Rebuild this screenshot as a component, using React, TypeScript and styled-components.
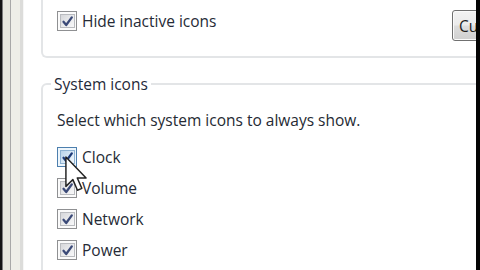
import React from "react";
import styled, { createGlobalStyle } from "styled-components";

const GlobalStyle = createGlobalStyle`
  html, body {
    margin: 0;
    padding: 0;
    background: #ffffff;
    overflow: hidden;
  }
  body {
    font-family: "Open Sans", "Noto Sans", sans-serif;
    font-size: 15.5px;
    color: #222;
  }
`;

const Frame = styled.div`
  position: relative;
  display: flex;
  width: 480px;
  height: 270px;
  overflow: hidden;
`;

const WindowEdge = styled.div`
  flex: 0 0 24px;
  background: linear-gradient(
    to right,
    #141414 0px,
    #141414 2px,
    #7c7c7c 2px,
    #7c7c7c 3px,
    #e7e7de 3px,
    #e7e7de 10px,
    #a8a8a8 10px,
    #a8a8a8 11px,
    #eeeee8 11px,
    #eeeee8 20px,
    #dcdcda 20px,
    #dcdcda 23px,
    #f6f6f6 23px
  );
`;

const RightEdge = styled.div`
  flex: 0 0 4px;
  background: #050505;
`;

const Dialog = styled.div`
  flex: 1;
  min-width: 0;
  background: #ffffff;
  padding-left: 17px;
  display: flex;
  flex-direction: column;
  overflow: hidden;
`;

const TopGroup = styled.div`
  box-sizing: border-box;
  width: calc(100% + 80px);
  height: 78px;
  margin-top: -20px;
  padding: 30px 4px 0 14px;
  border-left: 2px solid #e3e5e7;
  border-bottom: 2px solid #e3e5e7;
  border-bottom-left-radius: 6px;
  display: flex;
  align-items: flex-start;
  flex-shrink: 0;
`;

const SystemGroup = styled.fieldset`
  box-sizing: border-box;
  width: calc(100% + 80px);
  min-inline-size: 0;
  margin: 16px 0 0 0;
  padding: 0 0 40px 14px;
  border: 2px solid #e3e5e7;
  border-radius: 6px;
  flex-shrink: 0;
`;

const Legend = styled.legend`
  margin-left: -6px;
  padding: 0 3px;
  line-height: 20px;
  color: #1f2a3a;
`;

const Hint = styled.div`
  margin-top: 16px;
  line-height: 20px;
  color: #252a33;
`;

const List = styled.div`
  margin-top: 17px;
  display: flex;
  flex-direction: column;
  gap: 11px;
`;

const CheckRow = styled.label<{ $offset?: number }>`
  display: flex;
  align-items: center;
  gap: 5px;
  height: 20px;
  margin-top: ${(p) => p.$offset ?? 0}px;
  line-height: 20px;
  color: #262b36;
`;

const Box = styled.span<{ $hot?: boolean }>`
  box-sizing: border-box;
  width: 20px;
  height: 20px;
  border: 1px solid ${(p) => (p.$hot ? "#4d7fae" : "#8f9092")};
  background: ${(p) => (p.$hot ? "#eef6fc" : "#fbfbfb")};
  padding: 2px;
  display: flex;
`;

const BoxInner = styled.span<{ $hot?: boolean }>`
  flex: 1;
  border: 1px solid ${(p) => (p.$hot ? "#8fb3d3" : "#b9bbbf")};
  background: ${(p) =>
    p.$hot
      ? "linear-gradient(135deg, #b9d3ea 0%, #d9e9f6 55%, #f2f8fd 100%)"
      : "linear-gradient(135deg, #d6d7da 0%, #eaebed 55%, #f8f8f9 100%)"};
  display: flex;
  align-items: center;
  justify-content: center;
`;

const Button = styled.button`
  box-sizing: border-box;
  margin-left: auto;
  width: 100px;
  height: 31px;
  padding: 0 0 0 6px;
  text-align: left;
  font: inherit;
  color: #1c1c1c;
  border: 1px solid #707070;
  border-radius: 3px;
  background: linear-gradient(
    to bottom,
    #f3f3f3 0%,
    #ebebeb 48%,
    #dddddd 52%,
    #cfcfcf 100%
  );
  box-shadow: inset 0 0 0 1px #fbfbfb;
`;

const CursorLayer = styled.svg`
  position: absolute;
  left: 65px;
  top: 156px;
  width: 22px;
  height: 36px;
  pointer-events: none;
`;

const Check: React.FC<{ hot?: boolean }> = ({ hot }) => (
  <svg width="13" height="13" viewBox="0 0 13 13">
    <path
      d="M2.5 6.8 L5.2 10 L10.8 2.4"
      fill="none"
      stroke={hot ? "#1c3a78" : "#3b4a78"}
      strokeWidth="2.3"
      strokeLinecap="round"
      strokeLinejoin="round"
    />
  </svg>
);

const Checkbox: React.FC<{ label: string; offset?: number; hot?: boolean }> = ({
  label,
  offset,
  hot,
}) => (
  <CheckRow $offset={offset}>
    <Box $hot={hot}>
      <BoxInner $hot={hot}>
        <Check hot={hot} />
      </BoxInner>
    </Box>
    {label}
  </CheckRow>
);

const systemIcons = ["Clock", "Volume", "Network", "Power"];

const App: React.FC = () => {
  return (
    <>
      <GlobalStyle />
      <Frame>
        <WindowEdge />
        <Dialog>
          <TopGroup>
            <Checkbox label="Hide inactive icons" offset={1} />
            <Button>Customize...</Button>
          </TopGroup>
          <SystemGroup>
            <Legend>System icons</Legend>
            <Hint>Select which system icons to always show.</Hint>
            <List>
              {systemIcons.map((name, i) => (
                <Checkbox key={name} label={name} hot={i === 0} />
              ))}
            </List>
          </SystemGroup>
        </Dialog>
        <RightEdge />
        <CursorLayer viewBox="0 0 12 19.5">
          <path
            d="M0.5 0.5 L0.5 16.5 L4.3 12.8 L6.8 18.6 L9.2 17.6 L6.7 11.9 L11.5 11.9 Z"
            fill="#ffffff"
            stroke="#222222"
            strokeWidth="0.8"
            strokeLinejoin="round"
          />
        </CursorLayer>
      </Frame>
    </>
  );
};

export default App;
